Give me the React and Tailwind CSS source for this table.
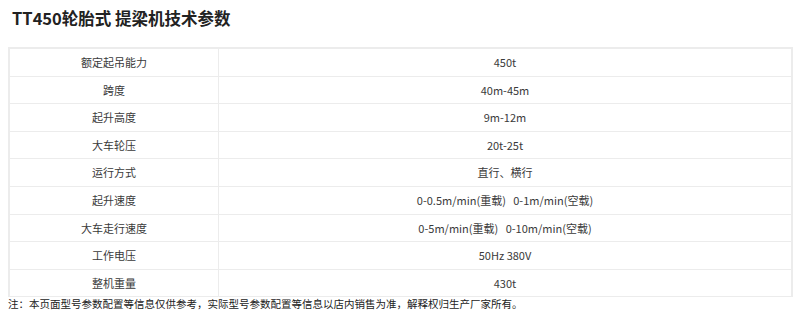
const rows = [
  ['额定起吊能力', '450t'],
  ['跨度', '40m-45m'],
  ['起升高度', '9m-12m'],
  ['大车轮压', '20t-25t'],
  ['运行方式', '直行、横行'],
  ['起升速度', '0-0.5m/min(重载)\u00a0\u00a0\u00a00-1m/min(空载)'],
  ['大车走行速度', '0-5m/min(重载)\u00a0\u00a0\u00a00-10m/min(空载)'],
  ['工作电压', '50Hz 380V'],
  ['整机重量', '430t'],
];

export default function App() {
  return (
    <div
      className="w-[800px] h-[314px] bg-white overflow-hidden"
      style={{ fontFamily: '"Noto Sans CJK SC", "Noto Sans", sans-serif' }}
    >
      <h1 className="pl-[12px] pt-[6px] h-[47px] text-[16.5px] font-bold leading-[24px] text-[#222]">
        TT450轮胎式 提梁机技术参数
      </h1>
      <table className="ml-[8px] w-[785px] border-separate border-spacing-0 border border-[#ececec] text-[11px] text-[#3a3a3a]">
        <tbody>
          {rows.map(([k, v]) => (
            <tr key={k}>
              <td className="w-[209px] border-l border-t border-[#ececec] text-center align-middle leading-[26.6px] p-0">
                {k}
              </td>
              <td className="border-l border-t border-r border-[#ececec] text-center align-middle leading-[26.6px] p-0">
                {v}
              </td>
            </tr>
          ))}
        </tbody>
      </table>
      <p className="pl-[8px] text-[10.5px] leading-[14px] text-[#222]">
        注：本页面型号参数配置等信息仅供参考，实际型号参数配置等信息以店内销售为准，解释权归生产厂家所有。
      </p>
    </div>
  );
}
